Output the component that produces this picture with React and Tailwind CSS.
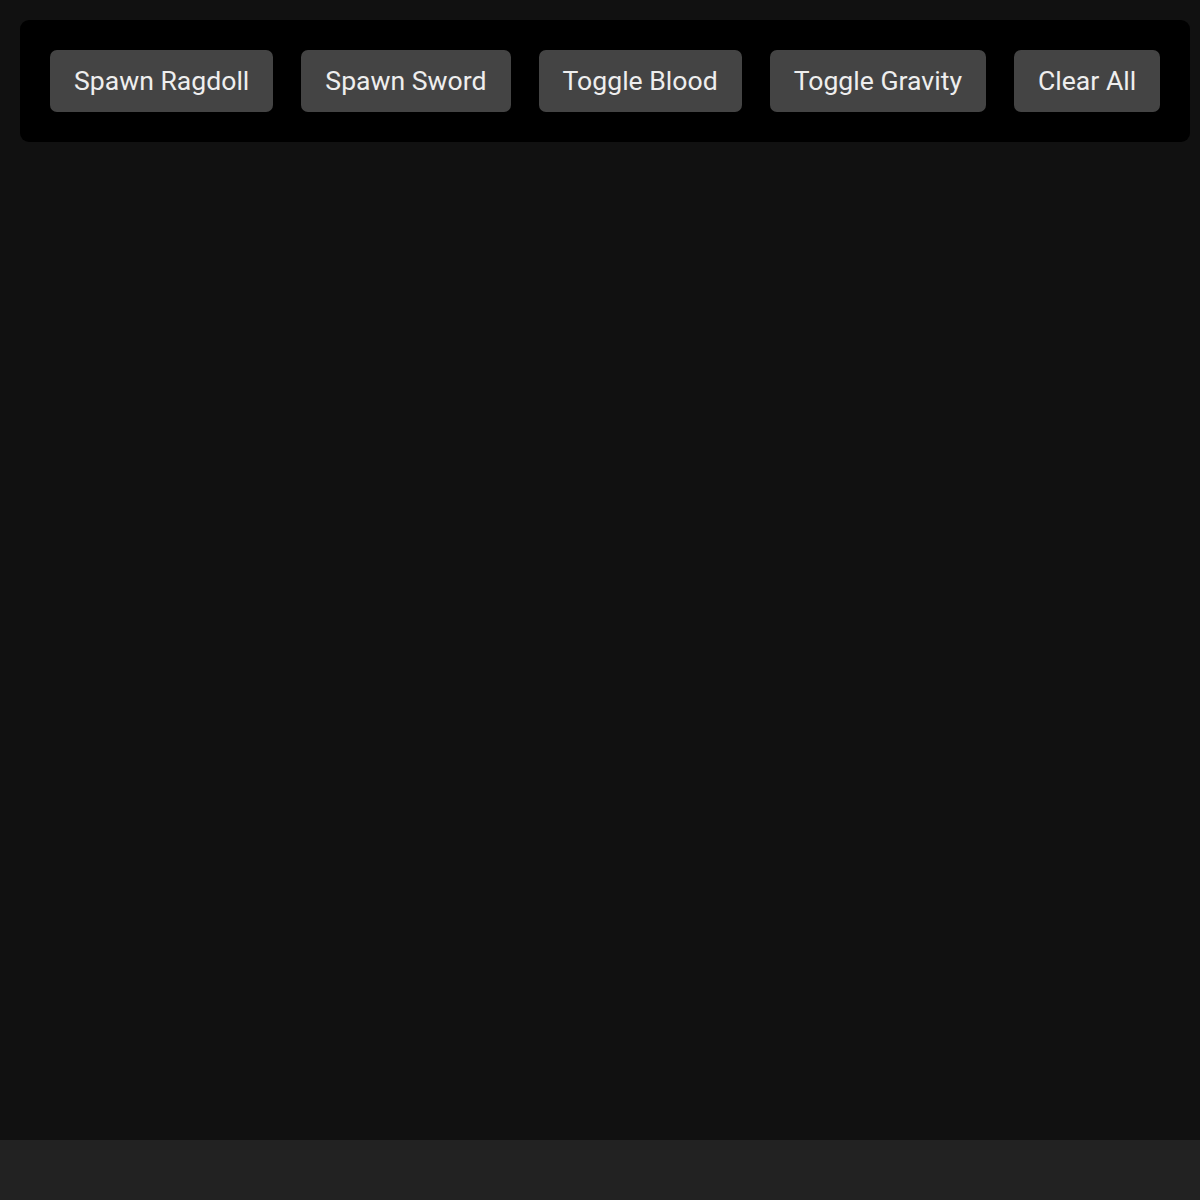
const BUTTONS = ['Spawn Ragdoll', 'Spawn Sword', 'Toggle Blood', 'Toggle Gravity', 'Clear All']

export default function App() {
  return (
    <div className="flex h-[1200px] w-[1200px] flex-col overflow-hidden bg-[#111111] font-['Roboto',sans-serif]">
      <div className="h-[1140px] p-5">
        <div className="flex w-max gap-[28px] rounded-[9px] bg-black p-[30px]">
          {BUTTONS.map((label) => (
            <button
              key={label}
              className="h-[62px] shrink-0 whitespace-nowrap rounded-[7px] bg-[#444444] px-6 text-[26.6px] leading-none text-[#eeeeee]"
            >
              {label}
            </button>
          ))}
        </div>
      </div>
      <div className="h-[60px] bg-[#222222]" />
    </div>
  )
}
